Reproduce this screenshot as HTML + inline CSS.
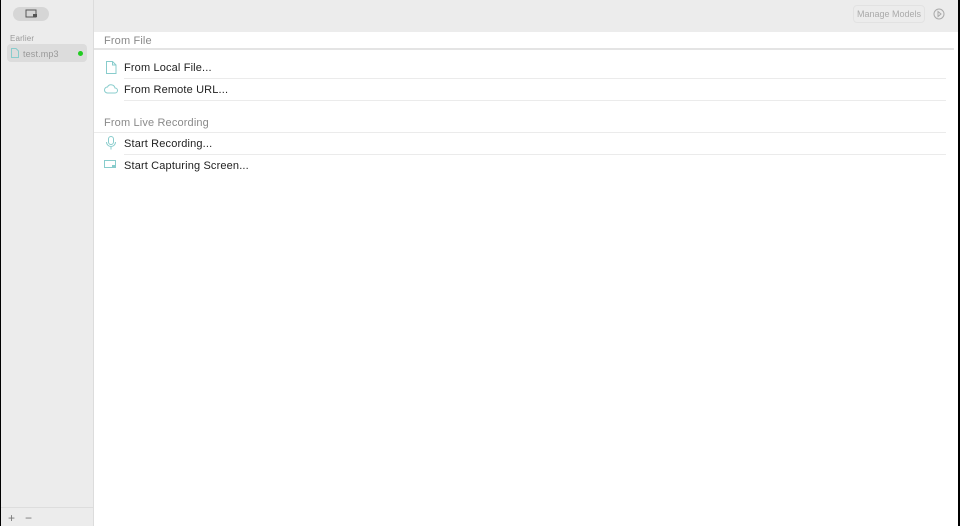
<!DOCTYPE html><html><head><style>
*{margin:0;padding:0;box-sizing:border-box}
body{width:960px;height:526px;overflow:hidden;background:#000;font-family:"Liberation Sans",sans-serif;position:relative}
.sb{position:absolute;left:1px;top:0;width:93px;height:526px;background:#ececec;border-right:1px solid #dcdcdc}
.main{position:absolute;left:94px;top:0;width:864px;height:526px;background:#fff}
.top{position:absolute;left:0;top:0;width:864px;height:32px;background:#ececec}
.t{position:absolute;font-size:11px;color:#222;white-space:nowrap;letter-spacing:0.15px}
.h{position:absolute;font-size:11px;color:#8a8a8a;white-space:nowrap;letter-spacing:0.15px}
.ln{position:absolute;height:1px;background:#ebebeb}
</style></head><body>
<div class="sb">
 <div style="position:absolute;left:12px;top:7px;width:36px;height:14px;border-radius:7px;background:#d6d6d6"></div>
 <svg style="position:absolute;left:24px;top:9px" width="14" height="10"><rect x="1" y="1" width="10" height="7" fill="none" stroke="#555"/><rect x="8" y="5" width="4" height="3" fill="#555"/></svg>
 <div class="h" style="left:9px;top:34px;font-size:8px;color:#999">Earlier</div>
 <div style="position:absolute;left:6px;top:44px;width:80px;height:18px;border-radius:4px;background:#dcdcdc"></div>
 <svg style="position:absolute;left:10px;top:48px" width="8" height="10"><path d="M.5 .5h4.5l2.5 2.5v6.5h-7z" fill="none" stroke="#8cc" stroke-width="1"/></svg>
 <div class="h" style="left:22px;top:49px;font-size:9px;color:#999">test.mp3</div>
 <div style="position:absolute;left:77px;top:51px;width:5px;height:5px;border-radius:50%;background:#2c2"></div>
 <div style="position:absolute;left:0;top:507px;width:92px;height:1px;background:#ddd"></div>
 <div class="h" style="left:7px;top:511px;font-size:12px;color:#777">+</div>
 <div class="h" style="left:24px;top:511px;font-size:12px;color:#777">−</div>
</div>
<div class="main">
 <div class="top"></div>
 <div style="position:absolute;left:759px;top:5px;width:72px;height:18px;border:1px solid #e2e2e2;border-radius:4px"></div>
 <div class="h" style="left:763px;top:9px;font-size:9px;color:#aaa;letter-spacing:0">Manage Models</div>
 <svg style="position:absolute;left:839px;top:8px" width="12" height="12"><circle cx="6" cy="6" r="5" fill="none" stroke="#aaa"/><path d="M5 3.5l3 2.5-3 2.5z" fill="none" stroke="#aaa"/></svg>
 <div class="h" style="left:10px;top:35px">From File</div>
 <div style="position:absolute;left:0;top:48px;width:860px;height:2px;background:#e4e4e4"></div>
 <svg style="position:absolute;left:12px;top:61px" width="11" height="13"><path d="M.5 .5h6l3.5 3.5v8.5h-9.5z M6.5 .5v3.5h3.5" fill="none" stroke="#8cc"/></svg>
 <div class="t" style="left:30px;top:62px">From Local File...</div>
 <div class="ln" style="left:30px;top:78px;width:822px"></div>
 <svg style="position:absolute;left:10px;top:84px" width="14" height="10"><path d="M3.5 9h7.5a2.5 2.5 0 0 0 0-5 4 4 0 0 0-7.5-1 3 3 0 0 0 0 6z" fill="none" stroke="#8cc"/></svg>
 <div class="t" style="left:30px;top:84px">From Remote URL...</div>
 <div class="ln" style="left:30px;top:100px;width:822px"></div>
 <div class="h" style="left:10px;top:117px">From Live Recording</div>
 <div class="ln" style="left:0;top:132px;width:852px"></div>
 <svg style="position:absolute;left:12px;top:136px" width="10" height="14"><rect x="2.5" y=".5" width="5" height="8" rx="2.5" fill="none" stroke="#8cc"/><path d="M.5 6a4.5 4.5 0 0 0 9 0M5 10.5v3" fill="none" stroke="#8cc"/></svg>
 <div class="t" style="left:30px;top:138px">Start Recording...</div>
 <div class="ln" style="left:30px;top:154px;width:822px"></div>
 <svg style="position:absolute;left:10px;top:160px" width="13" height="10"><rect x=".5" y=".5" width="11" height="7" fill="none" stroke="#8cc"/><rect x="8" y="5" width="4" height="3" fill="#8cc"/></svg>
 <div class="t" style="left:30px;top:160px">Start Capturing Screen...</div>
</div>
</body></html>
